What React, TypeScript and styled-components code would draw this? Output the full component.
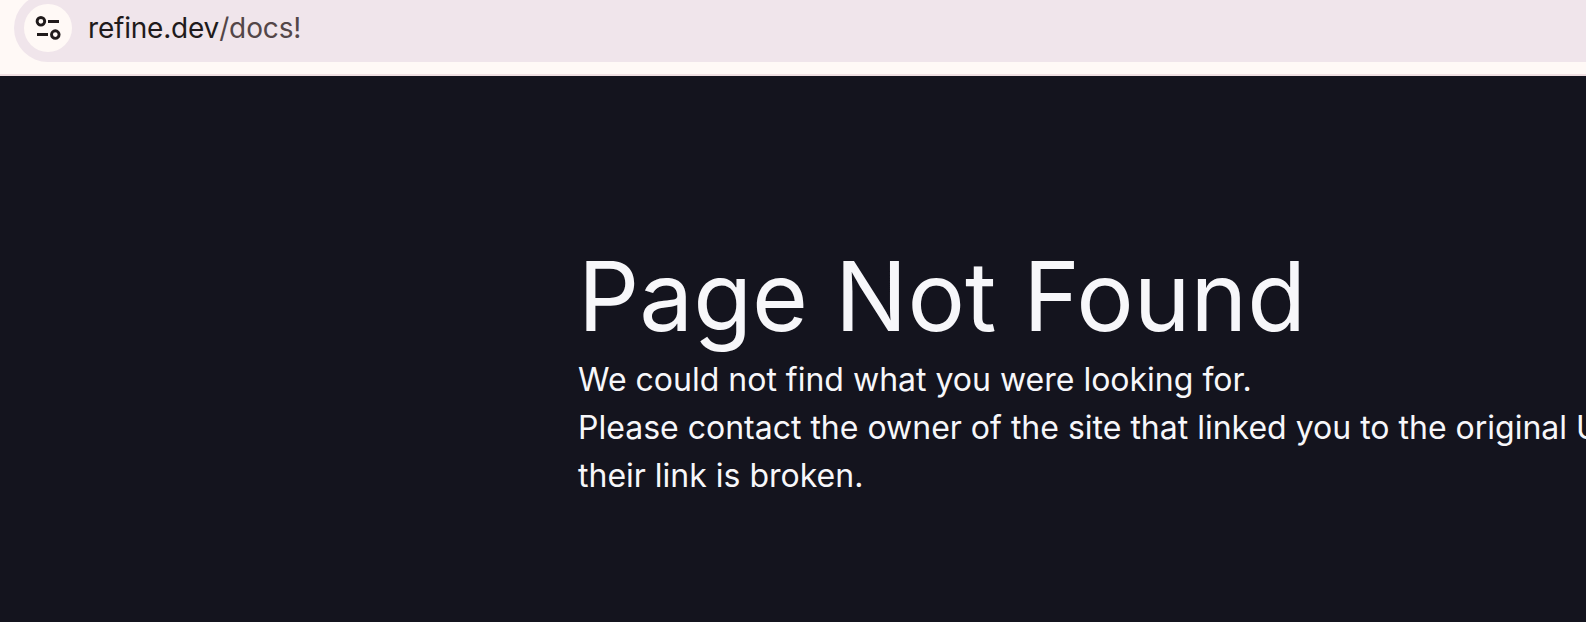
import React from "react";
import styled, { createGlobalStyle } from "styled-components";

const GlobalStyle = createGlobalStyle`
  body { margin: 0; overflow: hidden; background: #14141e; }
`;
const Window = styled.div`
  width: 1586px; height: 622px; overflow: hidden; display: flex; flex-direction: column;
  font-family: Inter, sans-serif;
`;
const Toolbar = styled.header`
  height: 76px; flex: none; box-sizing: border-box; background: #fff9f6;
  border-bottom: 2px solid #f0dfe2; padding-left: 14px;
`;
const AddressBar = styled.div`
  height: 68px; width: 1700px; margin-top: -6px; border-radius: 34px; background: #f0e5eb;
  display: flex; align-items: center; box-sizing: border-box; padding-left: 10px;
`;
const SiteButton = styled.span`
  width: 48px; height: 48px; border-radius: 50%; background: #fff9f6; margin-right: 16px;
  display: flex; align-items: center; justify-content: center;
`;
const Url = styled.span`
  font-size: 28px; line-height: 34px; color: #201a1b; white-space: pre; letter-spacing: -0.2px;
`;
const Path = styled.span` color: #534648; letter-spacing: -0.12px; `;
const Main = styled.main`
  flex: 1; background: #14141e; color: #f7f7fa; padding: 162px 0 0 578px;
`;
const Title = styled.h1`
  margin: 0 0 2px; font-weight: 400; font-size: 96px; line-height: 116px; white-space: nowrap;
`;
const Line = styled.p`
  margin: 0; font-size: 32px; line-height: 48px; white-space: nowrap;
`;

export default function App() {
  return (
    <Window>
      <GlobalStyle />
      <Toolbar>
        <AddressBar>
          <SiteButton>
            <svg width="26" height="26" viewBox="0 0 26 26" fill="none" stroke="#201a1b" strokeWidth="2.9">
              <circle cx="5.9" cy="6.3" r="3.8" />
              <path d="M13 6.5h11M2 19.5h11" />
              <circle cx="20.3" cy="19.6" r="3.8" />
            </svg>
          </SiteButton>
          <Url>refine.dev<Path>/docs!</Path></Url>
        </AddressBar>
      </Toolbar>
      <Main>
        <Title>Page Not Found</Title>
        <Line>We could not find what you were looking for.</Line>
        <Line>Please contact the owner of the site that linked you to the original URL</Line>
        <Line>their link is broken.</Line>
      </Main>
    </Window>
  );
}
